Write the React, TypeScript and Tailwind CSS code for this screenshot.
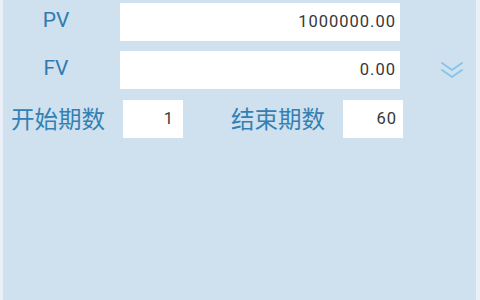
export default function App() {
  const label = "text-[#2f7bb0] text-[21px] leading-none";
  const cjk = { fontFamily: '"Noto Sans CJK SC", "Noto Sans", sans-serif' };
  const num = { fontFamily: 'Roboto, "Noto Sans", sans-serif' };

  return (
    <div className="w-[480px] h-[300px] bg-[#e9f0f8] pl-[3px] pr-[4px]">
      <div className="h-full bg-[#cfe0ef] pt-[3px]" style={num}>
        {/* PV */}
        <div className="flex items-center h-[38px]">
          <div className="w-[106px] text-center">
            <span className={label}>PV</span>
          </div>
          <div className="ml-[11px] w-[280px] h-full bg-white flex items-center justify-end pr-[4px] text-[16.5px] tracking-[1px] text-[#383838]">
            1000000.00
          </div>
        </div>

        {/* FV */}
        <div className="flex items-center h-[38px] mt-[10px]">
          <div className="w-[106px] text-center">
            <span className={label}>FV</span>
          </div>
          <div className="ml-[11px] w-[280px] h-full bg-white flex items-center justify-end pr-[4px] text-[16.5px] tracking-[1px] text-[#383838]">
            0.00
          </div>
          <svg className="ml-[40px]" width="24" height="18" viewBox="0 0 24 18" fill="none" stroke="#86c6ea" strokeWidth="2" strokeLinecap="round" strokeLinejoin="round">
            <path d="M2 2 L12 9 L22 2" />
            <path d="M2 9 L12 16 L22 9" />
          </svg>
        </div>

        {/* periods */}
        <div className="flex items-center h-[38px] mt-[11px]">
          <span className="ml-[8px] w-[96px] text-[23.5px] leading-none text-[#3380b3]" style={cjk}>开始期数</span>
          <div className="ml-[16px] w-[60px] h-full bg-white flex items-center justify-end pr-[10px] text-[16.5px] text-[#383838]">
            1
          </div>
          <span className="ml-[48px] w-[96px] text-[23.5px] leading-none text-[#3380b3]" style={cjk}>结束期数</span>
          <div className="ml-[16px] w-[60px] h-full bg-white flex items-center justify-end pr-[6px] text-[16.5px] tracking-[1px] text-[#383838]">
            60
          </div>
        </div>
      </div>
    </div>
  );
}
